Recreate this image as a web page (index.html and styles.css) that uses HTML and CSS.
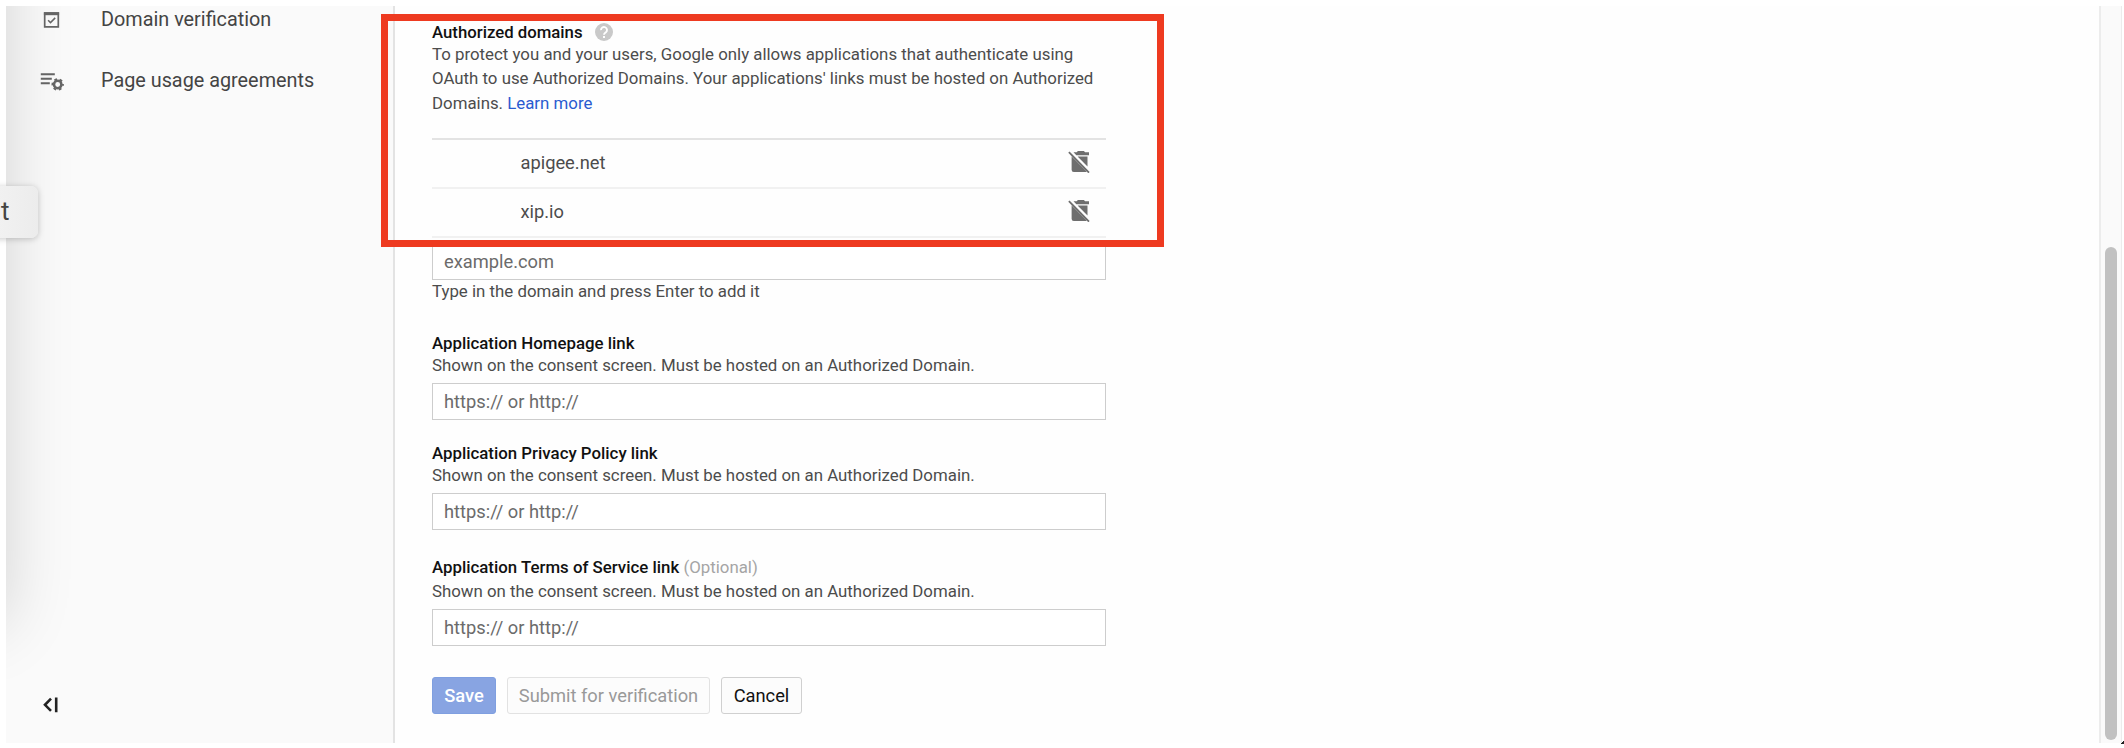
FILE: index.html
```html
<!DOCTYPE html>
<html lang="en">
<head>
<meta charset="utf-8">
<title>OAuth consent screen</title>
<link rel="stylesheet" href="styles.css">
</head>
<body>
<div class="app">
  <nav class="sidebar">
    <div class="drawer-shadow"></div>
    <div class="nav-item">
      <svg class="nav-icon" viewBox="0 0 26 26"><path d="M4.700 7.2h13.6v13.6H4.700z" fill="none" stroke="#666" stroke-width="1.7"/><path d="M3.900 6.2h15.2v3H3.900z" fill="#666"/><path d="M8.100 14.2l2.4 2.4 4.7-4.7" fill="none" stroke="#666" stroke-width="1.5"/></svg>
      <span>Domain verification</span>
    </div>
    <div class="nav-item">
      <svg class="nav-icon" viewBox="0 0 26 26"><path d="M.8 7.200h14M.8 11.700h11M.8 16.200h9" stroke="#666" stroke-width="2"/><circle cx="17.700" cy="17.500" r="3.700" fill="none" stroke="#666" stroke-width="2.5"/><circle cx="17.700" cy="17.500" r="5.300" fill="none" stroke="#666" stroke-width="1.8" stroke-dasharray="2.775 2.775" stroke-dashoffset="1.39"/></svg>
      <span>Page usage agreements</span>
    </div>
    <svg class="collapse" viewBox="0 0 16 16"><path d="M8 1.7L2 7.8l6 6.1M13.2 .6v14.6" fill="none" stroke="#222" stroke-width="2.6"/></svg>
  </nav>

  <main class="content">
    <section class="domains">
      <div class="title">Authorized domains
        <svg class="help" viewBox="0 0 18 18"><circle cx="9" cy="9" r="9" fill="#c9c9c9"/><path d="M6 7.1a3 3 0 1 1 4.9 2.2C9.700 10.200 9 10.600 9 11.700" fill="none" stroke="#fff" stroke-width="1.9"/><path d="M8 13h2v2H8z" fill="#fff"/></svg>
      </div>
      <p class="intro">To protect you and your users, Google only allows applications that authenticate using<br>OAuth to use Authorized Domains. Your applications' links must be hosted on Authorized<br>Domains. <a class="link">Learn more</a></p>
      <div class="table">
        <div class="row first"><span>apigee.net</span>
          <svg class="trash" viewBox="0 0 24 24"><path d="M6.500 3.300h3.200l1.200-1.300h6l1.200 1.300h3.900v2.900H9.300z" fill="#6e6e6e"/><path d="M10.600 7.600H20.500v10z" fill="#6e6e6e"/><path d="M4.600 7.200L19.700 22.500Q19 23 18.300 23H6.800Q4.600 23 4.600 20.800z" fill="#6e6e6e"/><path d="M1.900 3.200L22 23.600" stroke="#6e6e6e" stroke-width="1.8"/></svg>
        </div>
        <div class="row"><span>xip.io</span>
          <svg class="trash" viewBox="0 0 24 24"><path d="M6.500 3.300h3.200l1.200-1.300h6l1.200 1.300h3.900v2.900H9.300z" fill="#6e6e6e"/><path d="M10.600 7.600H20.500v10z" fill="#6e6e6e"/><path d="M4.600 7.200L19.700 22.500Q19 23 18.300 23H6.800Q4.600 23 4.600 20.800z" fill="#6e6e6e"/><path d="M1.900 3.200L22 23.600" stroke="#6e6e6e" stroke-width="1.8"/></svg>
        </div>
      </div>
      <div class="input">example.com</div>
      <p class="hint">Type in the domain and press Enter to add it</p>
    </section>

    <section class="field home">
      <div class="label">Application Homepage link</div>
      <p class="desc">Shown on the consent screen. Must be hosted on an Authorized Domain.</p>
      <div class="input">https:// or http://</div>
    </section>
    <section class="field privacy">
      <div class="label">Application Privacy Policy link</div>
      <p class="desc">Shown on the consent screen. Must be hosted on an Authorized Domain.</p>
      <div class="input">https:// or http://</div>
    </section>
    <section class="field terms">
      <div class="label">Application Terms of Service link <span class="optional">(Optional)</span></div>
      <p class="desc">Shown on the consent screen. Must be hosted on an Authorized Domain.</p>
      <div class="input">https:// or http://</div>
    </section>

    <div class="actions">
      <div class="button save">Save</div>
      <div class="button submit">Submit for verification</div>
      <div class="button cancel">Cancel</div>
    </div>
  </main>

  <div class="scrollbar"><div class="thumb"></div></div>
</div>
<div class="chip">t</div>
<div class="highlight"></div>
<div class="corner"></div>
</body>
</html>
```
FILE: styles.css
```css
* { box-sizing: border-box; }
body {
  margin: 0;
  height: 748px;
  overflow: hidden;
  position: relative;
  background: #fff;
  font-family: Roboto, sans-serif;
  font-size: 16.83px;
  color: #4c4c4c;
}
p { margin: 0; }
.app {
  display: flex;
  height: 748px;
  padding: 6px 2px 5px 6px;
}
.sidebar {
  position: relative;
  overflow: hidden;
  width: 389px;
  display: flex;
  flex-direction: column;
  gap: 35px;
  padding: 0 0 30px 34px;
  background: #fafafa;
  border-right: 2px solid #e3e3e3;
}
.drawer-shadow {
  position: absolute;
  left: -300px;
  top: -200px;
  width: 300px;
  height: 818px;
  box-shadow: 0 0 64px rgba(0, 0, 0, .16);
}
.nav-item {
  display: flex;
  gap: 35px;
  height: 26px;
  line-height: 28px;
  font-size: 19.82px;
  color: #444;
}
.nav-icon { width: 26px; height: 26px; }
.collapse { width: 16px; height: 16px; margin: auto 0 0 3px; }

.content {
  width: 1704px;
  padding: 15px 0 0 37px;
  background: #fefefe;
}
.title {
  display: flex;
  gap: 12px;
  height: 21px;
  line-height: 23px;
  font-weight: 500;
  font-size: 16.75px;
  color: #111;
}
.help { width: 18px; height: 18px; margin-top: 2px; }
.intro { line-height: 24.4px; white-space: nowrap; }
.link { color: #2a5bd0; }
.table {
  width: 674px;
  margin: 22.8px 0 5px;
  border-top: 2px solid #e3e3e3;
}
.row {
  display: flex;
  justify-content: space-between;
  height: 49px;
  line-height: 45px;
  padding: 0 15px 0 88.5px;
  border-bottom: 2px solid #f1f1f1;
  font-size: 18.3px;
}
.row.first { line-height: 46px; }
.trash { width: 24px; height: 24px; margin-top: 9px; }
.input {
  width: 674px;
  height: 37px;
  padding: 1px 0 0 11px;
  line-height: 34px;
  border: 1.5px solid #cdcdcd;
  background: #fff;
  font-size: 18.3px;
  color: #6b6b6b;
}
.hint { line-height: 23px; }
.home { margin-top: 29px; }
.privacy { margin-top: 22px; }
.terms { margin-top: 26px; }
.label { line-height: 22px; font-weight: 500; color: #111; }
.terms .label { height: 24px; }
.optional { font-weight: 400; color: #a5a5a5; }
.desc { line-height: 23px; margin-bottom: 6px; }
.actions { display: flex; gap: 11px; margin-top: 31px; }
.button {
  height: 37px;
  line-height: 35px;
  border: 1px solid #d0d0d0;
  border-radius: 3px;
  font-size: 18.3px;
  text-align: center;
}
.save { width: 64px; background: #88a4e2; border-color: #7f9fe0; color: #fff; font-weight: 500; }
.submit { width: 203px; background: #fcfcfc; border-color: #e2e2e2; color: #999; }
.cancel { width: 81px; background: #fcfcfc; color: #111; }

.scrollbar {
  width: 23px;
  padding: 241px 4px 4px 4px;
  background: #fafafa;
  border-left: 2px solid #ececec;
  border-right: 1px solid #ececec;
}
.thumb { width: 12px; height: 493px; border-radius: 6px; background: #c1c1c1; }

.chip {
  position: absolute;
  left: -40px;
  top: 186px;
  width: 78px;
  height: 52px;
  padding-left: 41px;
  line-height: 50px;
  font-size: 26px;
  color: #444;
  background: linear-gradient(90deg, #f1f1f1 50%, #ececec);
  border-radius: 7px;
  box-shadow: 0 1px 6px rgba(0, 0, 0, .22);
}
.highlight {
  position: absolute;
  left: 381px;
  top: 14px;
  width: 783px;
  height: 233px;
  border: 7px solid #ee3a20;
}
.corner {
  position: absolute;
  right: 0;
  bottom: 4px;
  width: 3px;
  height: 3px;
  background: linear-gradient(135deg, transparent 50%, #222 50%);
}
```
